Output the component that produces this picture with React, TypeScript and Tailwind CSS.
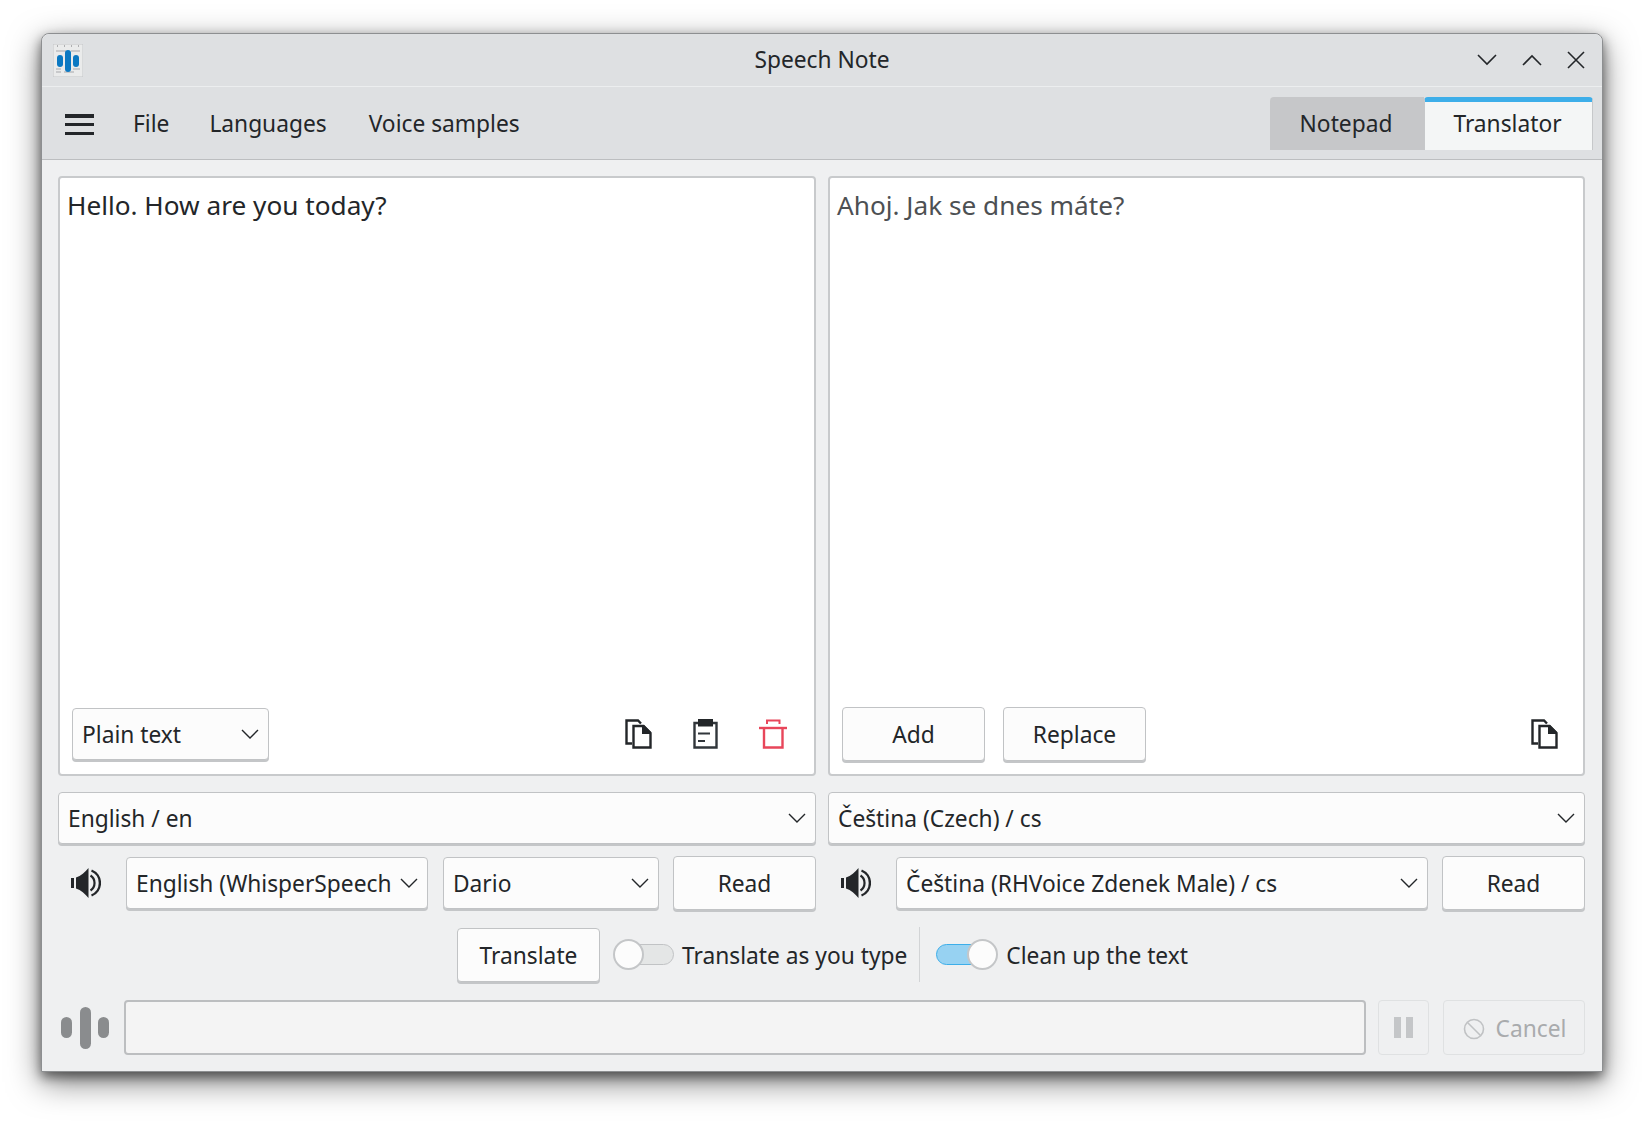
import { ReactNode } from "react";

function Chevron({ className = "" }: { className?: string }) {
  return (
    <svg width="18" height="10" viewBox="0 0 18 10" fill="none" className={`shrink-0 ${className}`}>
      <path d="M1 1l8 8 8-8" stroke="#232629" strokeWidth="1.4" />
    </svg>
  );
}

function Combo({ label, className = "" }: { label: string; className?: string }) {
  return (
    <div
      className={`flex h-[52px] items-center justify-between rounded-[4px] border border-[#c1c3c5] bg-[#fcfcfc] pl-[9px] pr-[9px] shadow-[0_2px_0_#c4c6c8] ${className}`}
    >
      <span className="whitespace-nowrap pt-[2px]">{label}</span>
      <Chevron />
    </div>
  );
}

function Btn({ label, className = "" }: { label: string; className?: string }) {
  return (
    <div
      className={`flex h-[54px] items-center justify-center rounded-[4px] border border-[#c1c3c5] bg-[#fcfcfc] pt-[2px] shadow-[0_2px_0_#c4c6c8] ${className}`}
    >
      {label}
    </div>
  );
}

function Toggle({ on }: { on: boolean }) {
  return (
    <div className={`relative h-[31px] ${on ? "w-[62px]" : "w-[61px]"} shrink-0`}>
      <div
        className={`absolute top-[5px] h-[21px] rounded-full border ${
          on
            ? "left-0 w-[52px] border-[#3daee9] bg-[#97d2f2]"
            : "left-[11px] w-[50px] border-[#c1c3c5] bg-[#e4e6e6]"
        }`}
      />
      <div
        className={`absolute top-0 h-[31px] w-[31px] rounded-full border-2 border-[#c4c6c8] bg-[#fcfcfc] ${
          on ? "left-[31px]" : "left-0"
        }`}
      />
    </div>
  );
}

function CopyIcon() {
  return (
    <svg width="27" height="30" viewBox="0 0 27 30" fill="none" className="shrink-0">
      <path d="M7 24.5H1.5V1.5H13l3 3" stroke="#232629" strokeWidth="2.4" />
      <path d="M8.5 7H18.500l7 7v14.500H8.500z" fill="#fff" stroke="#232629" strokeWidth="2.4" />
      <path d="M17 6h2l7 7v2h-9z" fill="#232629" />
    </svg>
  );
}

function PasteIcon() {
  return (
    <svg width="25" height="30" viewBox="0 0 25 30" fill="none" className="shrink-0">
      <path d="M5 4H1.500v24.500h22V4H20" stroke="#31363b" strokeWidth="2.400" />
      <rect x="5" y="0" width="15" height="7.500" fill="#232629" />
      <path d="M5 14.500h12M5 22h7" stroke="#31363b" strokeWidth="2.200" />
    </svg>
  );
}

function TrashIcon() {
  return (
    <svg width="28" height="30" viewBox="0 0 28 30" fill="none" className="shrink-0">
      <path d="M8 5V1.500h12.500V5" stroke="#e8465a" strokeWidth="2" />
      <path d="M0 9h28" stroke="#e8465a" strokeWidth="2.400" />
      <path d="M5 9v19.500h18.500V9" stroke="#e8465a" strokeWidth="2.400" />
    </svg>
  );
}

function SpeakerIcon() {
  return (
    <svg width="30" height="30" viewBox="0 0 30 30" fill="none" className="shrink-0">
      <rect x="0" y="10" width="3" height="10" fill="#232629" />
      <path d="M5 9.500C10 8 14 4 17.500 0v30C14 26 10 22 5 20.500z" fill="#232629" />
      <path d="M19.500 7.500a9 9 0 0 1 0 15" stroke="#232629" strokeWidth="2.200" />
      <path d="M20.500 2.500a13.500 13.500 0 0 1 0 25" stroke="#232629" strokeWidth="2.400" />
    </svg>
  );
}

function AppIcon() {
  return (
    <svg width="30" height="33" viewBox="0 0 30 33" className="shrink-0">
      <rect x="0" y="0" width="30" height="33" fill="#eaebeb" stroke="#c4c6c8" />
      <path d="M4 2h1M11 2h1M18 2h1M25 2h1" stroke="#9a9c9e" strokeWidth="1.500" />
      <path d="M3 7h10M18 7h9M3 28h5M11 28h10M3 25h5M20 25h7" stroke="#bdbfc1" strokeWidth="1.500" />
      <rect x="4" y="11" width="6" height="12" rx="3" fill="#0a78c2" />
      <rect x="12" y="6" width="6" height="22" rx="3" fill="#0a78c2" />
      <rect x="20" y="11" width="6" height="12" rx="3" fill="#0a78c2" />
    </svg>
  );
}

function Pane({ text, muted, children }: { text: string; muted?: boolean; children: ReactNode }) {
  return (
    <div className="flex h-[600px] flex-col justify-between rounded-[4px] border-2 border-[#c8cacc] bg-white pb-[13px]">
      <div className={`pl-[7px] pt-[10px] text-[26.2px] ${muted ? "text-[#4d5053]" : ""}`}>{text}</div>
      {children}
    </div>
  );
}

export default function App() {
  return (
    <div className="h-[1122px] w-[1644px] overflow-hidden bg-white pl-[41px] pt-[33px] font-['Noto_Sans',sans-serif] text-[22.75px] leading-[34px] text-[#232629]">
      <div className="flex h-[1039px] w-[1562px] flex-col rounded-t-[8px] border border-[#8d8f91] bg-[#eff0f1] shadow-[0_10px_32px_rgba(0,0,0,0.5),0_5px_12px_rgba(0,0,0,0.5)]">
        {/* Title bar */}
        <div className="relative flex h-[53px] shrink-0 items-center justify-center rounded-t-[8px] border-b border-[#eceeef] bg-[#dee0e2]">
          <div className="absolute left-[11px] top-[10px]">
            <AppIcon />
          </div>
          <span>Speech Note</span>
          <div className="absolute right-[17px] top-0 flex h-full items-center gap-[25px]">
            <svg width="20" height="12" viewBox="0 0 20 12" fill="none">
              <path d="M1 1l9 9 9-9" stroke="#232629" strokeWidth="1.600" />
            </svg>
            <svg width="20" height="12" viewBox="0 0 20 12" fill="none">
              <path d="M1 11l9-9 9 9" stroke="#232629" strokeWidth="1.600" />
            </svg>
            <svg width="18" height="18" viewBox="0 0 18 18" fill="none">
              <path d="M1 1l16 16M17 1L1 17" stroke="#232629" strokeWidth="1.600" />
            </svg>
          </div>
        </div>

        {/* Menu bar */}
        <div className="flex h-[73px] shrink-0 items-start border-b border-[#bcbec0] bg-[#dee0e2] pl-[23px] pr-[9px]">
          <div className="mt-[27px] flex w-[29px] flex-col gap-[5.25px]">
            <div className="h-[3.5px] bg-[#232629]" />
            <div className="h-[3.5px] bg-[#232629]" />
            <div className="h-[3.5px] bg-[#232629]" />
          </div>
          <div className="mt-[20px] ml-[39px] flex">
            <span className="mr-[40px]">File</span>
            <span className="mr-[42px]">Languages</span>
            <span>Voice samples</span>
          </div>
          <div className="ml-auto mt-[10px] flex h-[53px]">
            <div className="flex w-[154px] items-center justify-center rounded-tl-[4px] bg-[#c6c7c9] pr-[2px] pt-[1px]">
              Notepad
            </div>
            <div className="flex w-[169px] items-center justify-center rounded-t-[4px] border-x border-[#c6c8ca] border-t-[5px] border-t-[#3daee9] bg-[#f4f6f6] pb-[4px] pr-[2px]">
              Translator
            </div>
          </div>
        </div>

        {/* Body */}
        <div className="flex flex-1 flex-col pl-[16px] pr-[17px] pt-[16px]">
          <div className="grid grid-cols-[758px_757px] gap-x-[12px]">
            <Pane text="Hello. How are you today?">
              <div className="mb-[1px] flex items-center pl-[12px] pr-[27px]">
                <Combo label="Plain text" className="w-[197px]" />
                <div className="ml-auto flex items-center gap-[41px]">
                  <CopyIcon />
                  <PasteIcon />
                  <TrashIcon />
                </div>
              </div>
            </Pane>
            <Pane text="Ahoj. Jak se dnes máte?" muted>
              <div className="flex items-center gap-[18px] pl-[12px] pr-[25px]">
                <Btn label="Add" className="w-[143px]" />
                <Btn label="Replace" className="w-[143px]" />
                <div className="ml-auto">
                  <CopyIcon />
                </div>
              </div>
            </Pane>
          </div>

          <div className="mt-[16px] grid grid-cols-[758px_757px] gap-x-[12px]">
            <Combo label="English / en" />
            <Combo label="Čeština (Czech) / cs" />
          </div>

          <div className="mt-[12px] grid grid-cols-[758px_757px] gap-x-[12px]">
            <div className="flex items-center">
              <div className="w-[68px] shrink-0 pl-[13px]">
                <SpeakerIcon />
              </div>
              <Combo label="English (WhisperSpeech" className="w-[302px]" />
              <Combo label="Dario" className="ml-[15px] flex-1" />
              <Btn label="Read" className="ml-[14px] w-[143px]" />
            </div>
            <div className="flex items-center">
              <div className="w-[68px] shrink-0 pl-[13px]">
                <SpeakerIcon />
              </div>
              <Combo label="Čeština (RHVoice Zdenek Male) / cs" className="flex-1" />
              <Btn label="Read" className="ml-[14px] w-[143px]" />
            </div>
          </div>

          <div className="mt-[17px] flex h-[55px] items-center justify-center pl-[2px]">
            <Btn label="Translate" className="w-[143px]" />
            <div className="ml-[13px]">
              <Toggle on={false} />
            </div>
            <span className="ml-[8px] pt-[2px]">Translate as you type</span>
            <div className="ml-[12px] h-[55px] w-px bg-[#d2d4d6]" />
            <div className="ml-[16px]">
              <Toggle on />
            </div>
            <span className="ml-[8px] pt-[2px]">Clean up the text</span>
          </div>

          <div className="mt-[18px] flex h-[55px]">
            <div className="flex w-[66px] shrink-0 items-center gap-[7.5px] pl-[3px]">
              <div className="h-[21px] w-[11px] rounded-full bg-[#8a8c8e]" />
              <div className="h-[42px] w-[11px] rounded-full bg-[#8a8c8e]" />
              <div className="h-[21px] w-[11px] rounded-full bg-[#8a8c8e]" />
            </div>
            <div className="flex-1 rounded-[4px] border-2 border-[#bcbec0] bg-[#f4f4f4]" />
            <div className="ml-[12px] flex w-[51px] items-center justify-center gap-[5px] rounded-[4px] border border-[#dfe1e2]">
              <div className="h-[21px] w-[7px] bg-[#c4c6c8]" />
              <div className="h-[21px] w-[7px] bg-[#c4c6c8]" />
            </div>
            <div className="ml-[14px] flex w-[142px] items-center justify-center gap-[11px] rounded-[4px] border border-[#dfe1e2] pl-[1px] pt-[2px] text-[#a9abad]">
              <svg width="22" height="22" viewBox="0 0 22 22" fill="none">
                <circle cx="11" cy="11" r="9.500" stroke="#c0c2c4" strokeWidth="1.600" />
                <path d="M4.500 4.500l13 13" stroke="#c0c2c4" strokeWidth="1.600" />
              </svg>
              <span>Cancel</span>
            </div>
          </div>
        </div>
      </div>
    </div>
  );
}
